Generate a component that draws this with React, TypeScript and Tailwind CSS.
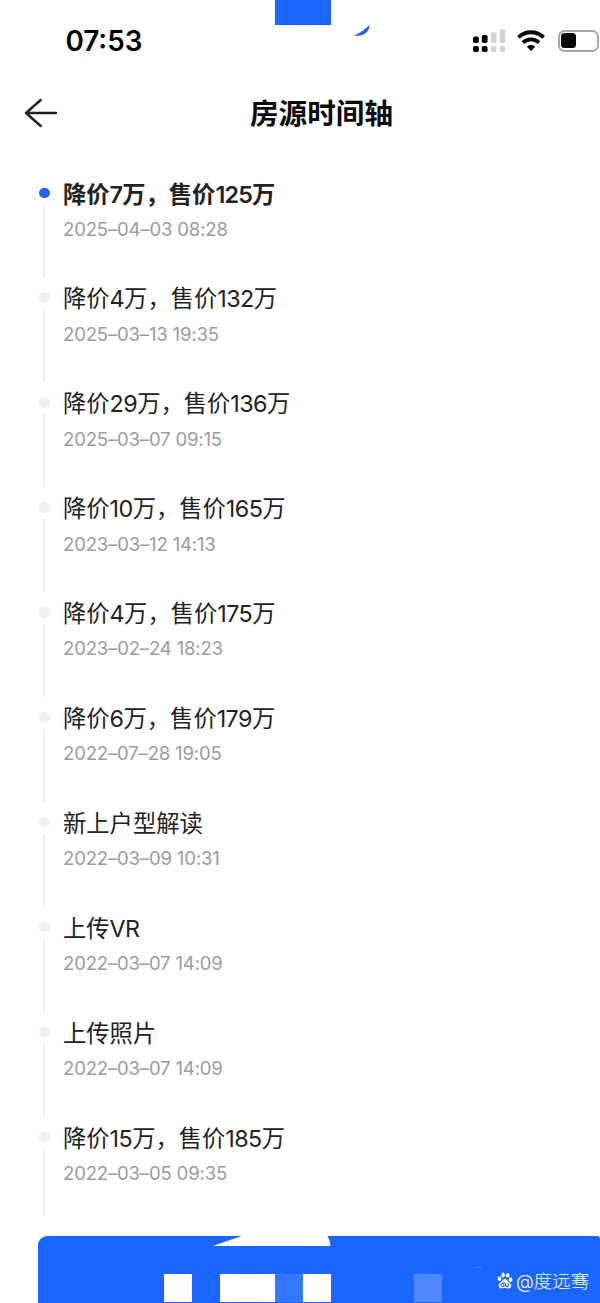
import React from "react";
import { SiBaidu } from "react-icons/si";

type Entry = { title: string; time: string };

const entries: Entry[] = [
  { title: "降价7万，售价125万", time: "2025–04–03 08:28" },
  { title: "降价4万，售价132万", time: "2025–03–13 19:35" },
  { title: "降价29万，售价136万", time: "2025–03–07 09:15" },
  { title: "降价10万，售价165万", time: "2023–03–12 14:13" },
  { title: "降价4万，售价175万", time: "2023–02–24 18:23" },
  { title: "降价6万，售价179万", time: "2022–07–28 19:05" },
  { title: "新上户型解读", time: "2022–03–09 10:31" },
  { title: "上传VR", time: "2022–03–07 14:09" },
  { title: "上传照片", time: "2022–03–07 14:09" },
  { title: "降价15万，售价185万", time: "2022–03–05 09:35" },
];

function Signal() {
  return (
    <svg className="h-[24px] w-[33px]" viewBox="0 0 33 24">
      <g fill="#050505">
        <rect x="0" y="7.5" width="5.8" height="6.5" rx="1.8" />
        <rect x="8.8" y="6" width="5.8" height="8" rx="1.8" />
        <rect x="0" y="17" width="5.8" height="6" rx="1.8" />
        <rect x="8.8" y="17" width="5.8" height="6" rx="1.8" />
      </g>
      <g fill="#d3d3d3">
        <rect x="18" y="3.3" width="5.4" height="10.7" rx="1.8" />
        <rect x="26.8" y="0.3" width="5.4" height="13.7" rx="1.8" />
        <rect x="18" y="17" width="5.4" height="6" rx="1.8" />
        <rect x="26.8" y="17" width="5.4" height="6" rx="1.8" />
      </g>
    </svg>
  );
}

function Wifi() {
  return (
    <svg className="h-[21px] w-[28px]" viewBox="0 0 28 21" fill="none" stroke="#050505" strokeWidth="3.8">
      <path d="M1.4 7.4 C8.4 0.5 19.6 0.5 26.6 7.4" />
      <path d="M6 12.6 C10.5 8.4 17.5 8.4 22 12.6" />
      <path d="M14 21 L9.8 16.7 C12.2 14.5 15.8 14.5 18.2 16.7 Z" fill="#050505" stroke="none" />
    </svg>
  );
}

function StatusBar() {
  return (
    <div className="relative h-[80px] w-full">
      <div className="absolute left-[275px] top-0 h-[25px] w-[56px] bg-[#1a66ff]" />
      <svg className="absolute left-[353px] top-[24px] h-[13px] w-[18px]" viewBox="0 0 18 13">
        <path d="M16.8 1 C12 5 7 9.5 1 11.6 C7 12.6 16 10.5 16.8 1 Z" fill="#2463e6" />
      </svg>
      <div className="flex items-start pl-[65.5px] pt-[25px]">
        <span className="w-[100px] text-[27.8px] font-semibold leading-[33px] text-black">07:53</span>
        <div className="ml-[307.5px] mt-[4px] flex items-start">
          <Signal />
          <div className="ml-[11px] mt-[1px]">
            <Wifi />
          </div>
          <div className="ml-[12.5px] mt-[1px] flex h-[21.5px] w-[41.5px] items-center rounded-[6.5px] border-2 border-[#a8a8a8] pl-[1px]">
            <div className="h-[15px] w-[15px] rounded-[3.5px] bg-[#050505]" />
          </div>
        </div>
      </div>
    </div>
  );
}

function Header() {
  return (
    <header className="flex h-[64px] items-center">
      <svg
        className="ml-[24px] mt-[2px] h-[30px] w-[34px] shrink-0"
        viewBox="0 0 34 30"
        fill="none"
        stroke="#222"
        strokeWidth="2.4"
        strokeLinecap="round"
        strokeLinejoin="round"
      >
        <path d="M32 15 H2 M16.7 2 L2 15 L16.7 28" />
      </svg>
      <h1 className="ml-[192px] mt-[3px] whitespace-nowrap text-[28.6px] font-bold leading-[40px] text-[#0a0a0a]">
        房源时间轴
      </h1>
    </header>
  );
}

/* Latin runs are set slightly tighter than the Chinese text around them. */
function Mixed({ text, first }: { text: string; first: boolean }) {
  return (
    <>
      {text.split(/([0-9A-Z]+)/).map((part, i) =>
        i % 2 === 1 ? (
          <span key={i} className={first ? "font-semibold tracking-[-0.8px]" : "tracking-[-0.55px]"}>
            {part}
          </span>
        ) : (
          part
        ),
      )}
    </>
  );
}

function Row({ entry, first, last }: { entry: Entry; first: boolean; last: boolean }) {
  return (
    <li className="flex h-[104.9px]">
      <div className="flex w-[10.5px] shrink-0 flex-col items-center">
        <span className={`h-[10.5px] w-[10.5px] rounded-full ${first ? "bg-[#2166e8]" : "bg-[#f0f0f0]"}`} />
        <span className={`mt-[6.5px] w-[2px] bg-[#f0f0f0] ${last ? "h-[67px]" : "h-[73px]"}`} />
      </div>
      <div className="ml-[13.5px] -mt-[10px] whitespace-nowrap">
        <p className={`text-[23.3px] leading-[34px] text-[#222] ${first ? "font-bold" : "font-normal"}`}>
          <Mixed text={entry.title} first={first} />
        </p>
        <p className="mt-[5.4px] text-[18.6px] leading-[24px] tracking-[-0.2px] text-[#9c9c9c]">{entry.time}</p>
      </div>
    </li>
  );
}

function Footer() {
  return (
    <footer className="relative ml-[38px] h-[67px] overflow-hidden rounded-tl-[9px] rounded-tr-[3px] bg-[#1a66ff]">
      <svg className="absolute left-[174px] top-0 h-[11px] w-[120px]" viewBox="0 0 120 11">
        <path d="M30 0 H115.5 Q118 4 118.5 10 H1 Q16 4.5 30 0 Z" fill="#fff" />
      </svg>
      <div className="absolute left-[126px] top-[38px] h-[27.5px] w-[28px] bg-white" />
      <div className="absolute left-[182px] top-[38px] flex h-[27.5px]">
        <div className="w-[55px] bg-white" />
        <div className="w-[28px] bg-[#3377ff]" />
        <div className="w-[27.5px] bg-white" />
      </div>
      <div className="absolute left-[376px] top-[38px] h-[27.5px] w-[28px] bg-[#4d88ff]" />
      <div className="absolute left-[438px] top-[31px] h-px w-[5px] bg-[#4d88ff]" />
      <div className="absolute left-[459px] top-[32px] flex items-center text-white">
        <SiBaidu className="-mt-px h-[17px] w-[16px]" />
        <span className="ml-[3px] whitespace-nowrap text-[18.4px] font-light leading-[26px]">@度远骞</span>
      </div>
    </footer>
  );
}

export default function App() {
  return (
    <main className="flex h-[1303px] w-[600px] flex-col overflow-hidden bg-white font-['Inter','Noto_Sans_CJK_SC',sans-serif]">
      <StatusBar />
      <Header />
      <ul className="h-[1092px] shrink-0 pl-[39px] pt-[43.5px]">
        {entries.map((entry, i) => (
          <Row key={i} entry={entry} first={i === 0} last={i === entries.length - 1} />
        ))}
      </ul>
      <Footer />
    </main>
  );
}
